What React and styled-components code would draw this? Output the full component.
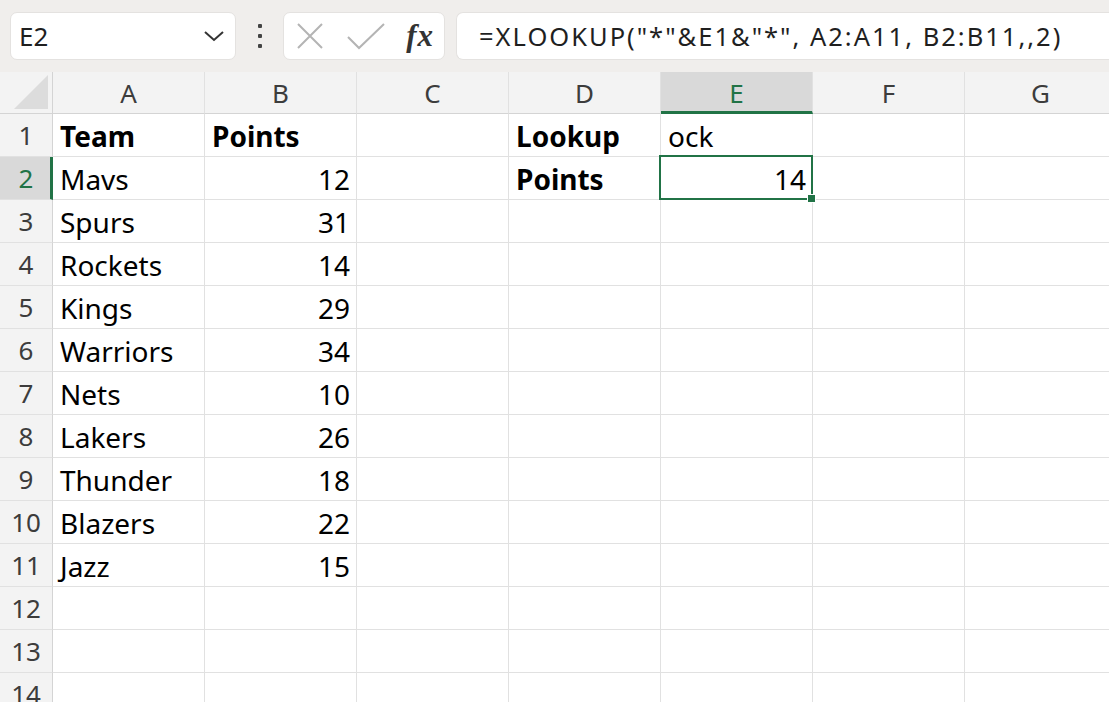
import React from "react";
import styled, { createGlobalStyle } from "styled-components";

const GlobalStyle = createGlobalStyle`
  html, body {
    margin: 0;
    padding: 0;
    background: #ffffff;
    overflow: hidden;
  }
  body {
    font-family: "Noto Sans", "Open Sans", sans-serif;
  }
`;

const GREEN = "#217346";
const GRID = "#e1e1e1";

const Page = styled.div`
  width: 1109px;
  height: 702px;
  overflow: hidden;
  background: #ffffff;
`;

const Toolbar = styled.div`
  display: flex;
  align-items: center;
  height: 72px;
  padding: 0 0 0 10px;
  background: #f0eeec;
  box-sizing: border-box;
`;

const Box = styled.div`
  display: flex;
  align-items: center;
  height: 48px;
  box-sizing: border-box;
  background: #ffffff;
  border: 1px solid #e4e2e0;
  border-radius: 7px;
`;

const NameBox = styled(Box)`
  width: 226px;
  padding: 0 10px 0 8px;
  justify-content: space-between;
  font-size: 26px;
  color: #1f1f1f;
`;

const Grip = styled.div`
  display: flex;
  flex-direction: column;
  gap: 6px;
  width: 47px;
  align-items: center;
`;

const Dot = styled.span`
  width: 4px;
  height: 4px;
  background: #444;
  border-radius: 1px;
`;

const FxBox = styled(Box)`
  width: 162px;
  padding: 0 10px 0 11px;
  justify-content: space-between;
`;

const Fx = styled.span`
  font-family: "Liberation Serif", "DejaVu Serif", serif;
  font-style: italic;
  font-weight: bold;
  font-size: 31px;
  color: #333;
  letter-spacing: 1px;
`;

const FormulaBox = styled(Box)`
  flex: 1;
  margin-left: 11px;
  padding-left: 22px;
  border-right: none;
  border-radius: 7px 0 0 7px;
  font-size: 25.5px;
  letter-spacing: 2px;
  color: #1f1f1f;
  white-space: nowrap;
`;

const Sheet = styled.div`
  display: grid;
  grid-template-columns: 53px repeat(7, 152px);
  grid-auto-rows: 43px;
  grid-template-rows: 42px;
`;

const Corner = styled.div`
  position: relative;
  background: #f3f3f3;
  border-right: 1px solid #d4d4d4;
  border-bottom: 1px solid #d4d4d4;
  box-sizing: border-box;
  &::after {
    content: "";
    position: absolute;
    right: 4px;
    bottom: 4px;
    width: 34px;
    height: 34px;
    background: #dcdcdc;
    clip-path: polygon(100% 0, 100% 100%, 0 100%);
  }
`;

const ColHead = styled.div`
  display: flex;
  align-items: center;
  justify-content: center;
  box-sizing: border-box;
  background: ${(p) => (p.active ? "#d9d9d9" : "#f3f3f3")};
  border-right: 1px solid ${GRID};
  border-bottom: ${(p) => (p.active ? `3px solid ${GREEN}` : "1px solid #d4d4d4")};
  color: ${(p) => (p.active ? GREEN : "#3c3c3c")};
  font-size: 26px;
  padding-top: ${(p) => (p.active ? "2px" : "0")};
`;

const RowHead = styled.div`
  display: flex;
  align-items: center;
  justify-content: center;
  box-sizing: border-box;
  background: ${(p) => (p.active ? "#d9d9d9" : "#f3f3f3")};
  border-right: ${(p) => (p.active ? `3px solid ${GREEN}` : "1px solid #d4d4d4")};
  border-bottom: 1px solid ${GRID};
  color: ${(p) => (p.active ? GREEN : "#3c3c3c")};
  font-size: 26px;
  padding-left: ${(p) => (p.active ? "2px" : "0")};
`;

const Cell = styled.div`
  position: relative;
  display: flex;
  align-items: center;
  justify-content: ${(p) => (p.num ? "flex-end" : "flex-start")};
  padding: 2px 6px 0 7px;
  box-sizing: border-box;
  border-right: 1px solid ${GRID};
  border-bottom: 1px solid ${GRID};
  font-size: 28px;
  font-weight: ${(p) => (p.bold ? 700 : 400)};
  color: #000;
  white-space: nowrap;
`;

const Selection = styled.div`
  position: absolute;
  z-index: 2;
  left: -2px;
  top: -2px;
  right: -1px;
  bottom: -1px;
  border: 2px solid ${GREEN};
  pointer-events: none;
  &::after {
    content: "";
    position: absolute;
    right: -5px;
    bottom: -5px;
    width: 7px;
    height: 7px;
    background: ${GREEN};
    border: 1px solid #fff;
  }
`;

const columns = ["A", "B", "C", "D", "E", "F", "G"];

const teams = [
  ["Mavs", 12],
  ["Spurs", 31],
  ["Rockets", 14],
  ["Kings", 29],
  ["Warriors", 34],
  ["Nets", 10],
  ["Lakers", 26],
  ["Thunder", 18],
  ["Blazers", 22],
  ["Jazz", 15],
];

const buildRows = () => {
  const rows = [];
  rows.push([
    { v: "Team", bold: true },
    { v: "Points", bold: true },
    {},
    { v: "Lookup", bold: true },
    { v: "ock" },
    {},
    {},
  ]);
  teams.forEach(([name, pts], i) => {
    const row = [{ v: name }, { v: pts, num: true }, {}, {}, {}, {}, {}];
    if (i === 0) {
      row[3] = { v: "Points", bold: true };
      row[4] = { v: 14, num: true, selected: true };
    }
    rows.push(row);
  });
  for (let i = 0; i < 3; i++) rows.push([{}, {}, {}, {}, {}, {}, {}]);
  return rows;
};

const Chevron = () => (
  <svg width="22" height="14" viewBox="0 0 22 14">
    <path d="M2 3 L11 11 L20 3" fill="none" stroke="#333" strokeWidth="2" />
  </svg>
);

const Cross = () => (
  <svg width="30" height="30" viewBox="0 0 30 30">
    <path d="M3 3 L27 27 M27 3 L3 27" stroke="#b4b4b4" strokeWidth="2" fill="none" />
  </svg>
);

const Check = () => (
  <svg width="40" height="30" viewBox="0 0 40 30">
    <path d="M2 16 L13 27 L38 3" stroke="#b4b4b4" strokeWidth="2" fill="none" />
  </svg>
);

export default function App() {
  const rows = buildRows();
  return (
    <Page>
      <GlobalStyle />
      <Toolbar>
        <NameBox>
          <span>E2</span>
          <Chevron />
        </NameBox>
        <Grip>
          <Dot />
          <Dot />
          <Dot />
        </Grip>
        <FxBox>
          <Cross />
          <Check />
          <Fx>fx</Fx>
        </FxBox>
        <FormulaBox>=XLOOKUP("*"&E1&"*", A2:A11, B2:B11,,2)</FormulaBox>
      </Toolbar>
      <Sheet>
        <Corner />
        {columns.map((c) => (
          <ColHead key={c} active={c === "E"}>
            {c}
          </ColHead>
        ))}
        {rows.map((row, r) => (
          <React.Fragment key={r}>
            <RowHead active={r === 1}>{r + 1}</RowHead>
            {row.map((cell, c) => (
              <Cell key={c} bold={cell.bold} num={cell.num}>
                {cell.v}
                {cell.selected && <Selection />}
              </Cell>
            ))}
          </React.Fragment>
        ))}
      </Sheet>
    </Page>
  );
}
